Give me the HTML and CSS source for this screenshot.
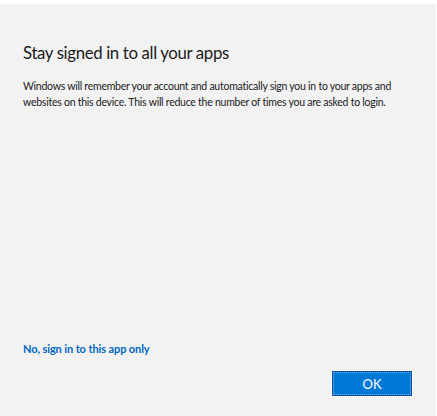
FILE: index.html
```html
<!DOCTYPE html>
<html>
<head>
<meta charset="utf-8">
<link rel="stylesheet" href="styles.css">
</head>
<body>
<div class="dialog">
  <div class="content">
    <h1 class="title">Stay signed in to all your apps</h1>
    <p class="desc">Windows will remember your account and automatically sign you in to your apps and websites on this device. This will reduce the number of times you are asked to login.</p>
  </div>
  <div class="footer">
    <a class="link" href="#">No, sign in to this app only</a>
    <div class="actions">
      <button class="ok"><span class="focus">OK</span></button>
    </div>
  </div>
</div>
</body>
</html>
```
FILE: styles.css
```css
html, body {
  margin: 0;
  padding: 0;
  background: #ffffff;
}
.dialog {
  margin-top: 4px;
  margin-right: 1px;
  height: 412px;
  background: #f2f2f2;
  box-sizing: border-box;
  padding: 0 0 0 23px;
  display: flex;
  flex-direction: column;
  font-family: Lato, "Noto Sans", sans-serif;
  color: #000;
}
.content {
  flex: 1;
}
.title {
  margin: 37px 0 0 0;
  font-size: 16.8px;
  letter-spacing: -0.35px;
  font-weight: 400;
  line-height: 24px;
  color: #1a1a1a;
}
.desc {
  margin: 13px 0 0 0;
  font-size: 10.5px;
  letter-spacing: -0.25px;
  line-height: 16px;
  color: #1a1a1a;
  width: 392px;
}
.footer {
  display: flex;
  flex-direction: column;
  padding-bottom: 19px;
}
.link {
  font-size: 11px;
  letter-spacing: -0.1px;
  font-weight: 700;
  color: #0067c0;
  text-decoration: none;
  line-height: 16px;
}
.actions {
  display: flex;
  justify-content: flex-end;
  padding-right: 23px;
  margin-top: 13px;
}
.ok {
  width: 82px;
  height: 27px;
  padding: 1px;
  border: 1px solid #ffffff;
  background: #0a4fa0;
  box-sizing: border-box;
  display: flex;
}
.focus {
  flex: 1;
  background: #0078d7;
  border: 1px dotted #7db3e8;
  color: #ffffff;
  font-family: Lato, "Noto Sans", sans-serif;
  font-size: 13px;
  display: flex;
  align-items: center;
  justify-content: center;
}
```
